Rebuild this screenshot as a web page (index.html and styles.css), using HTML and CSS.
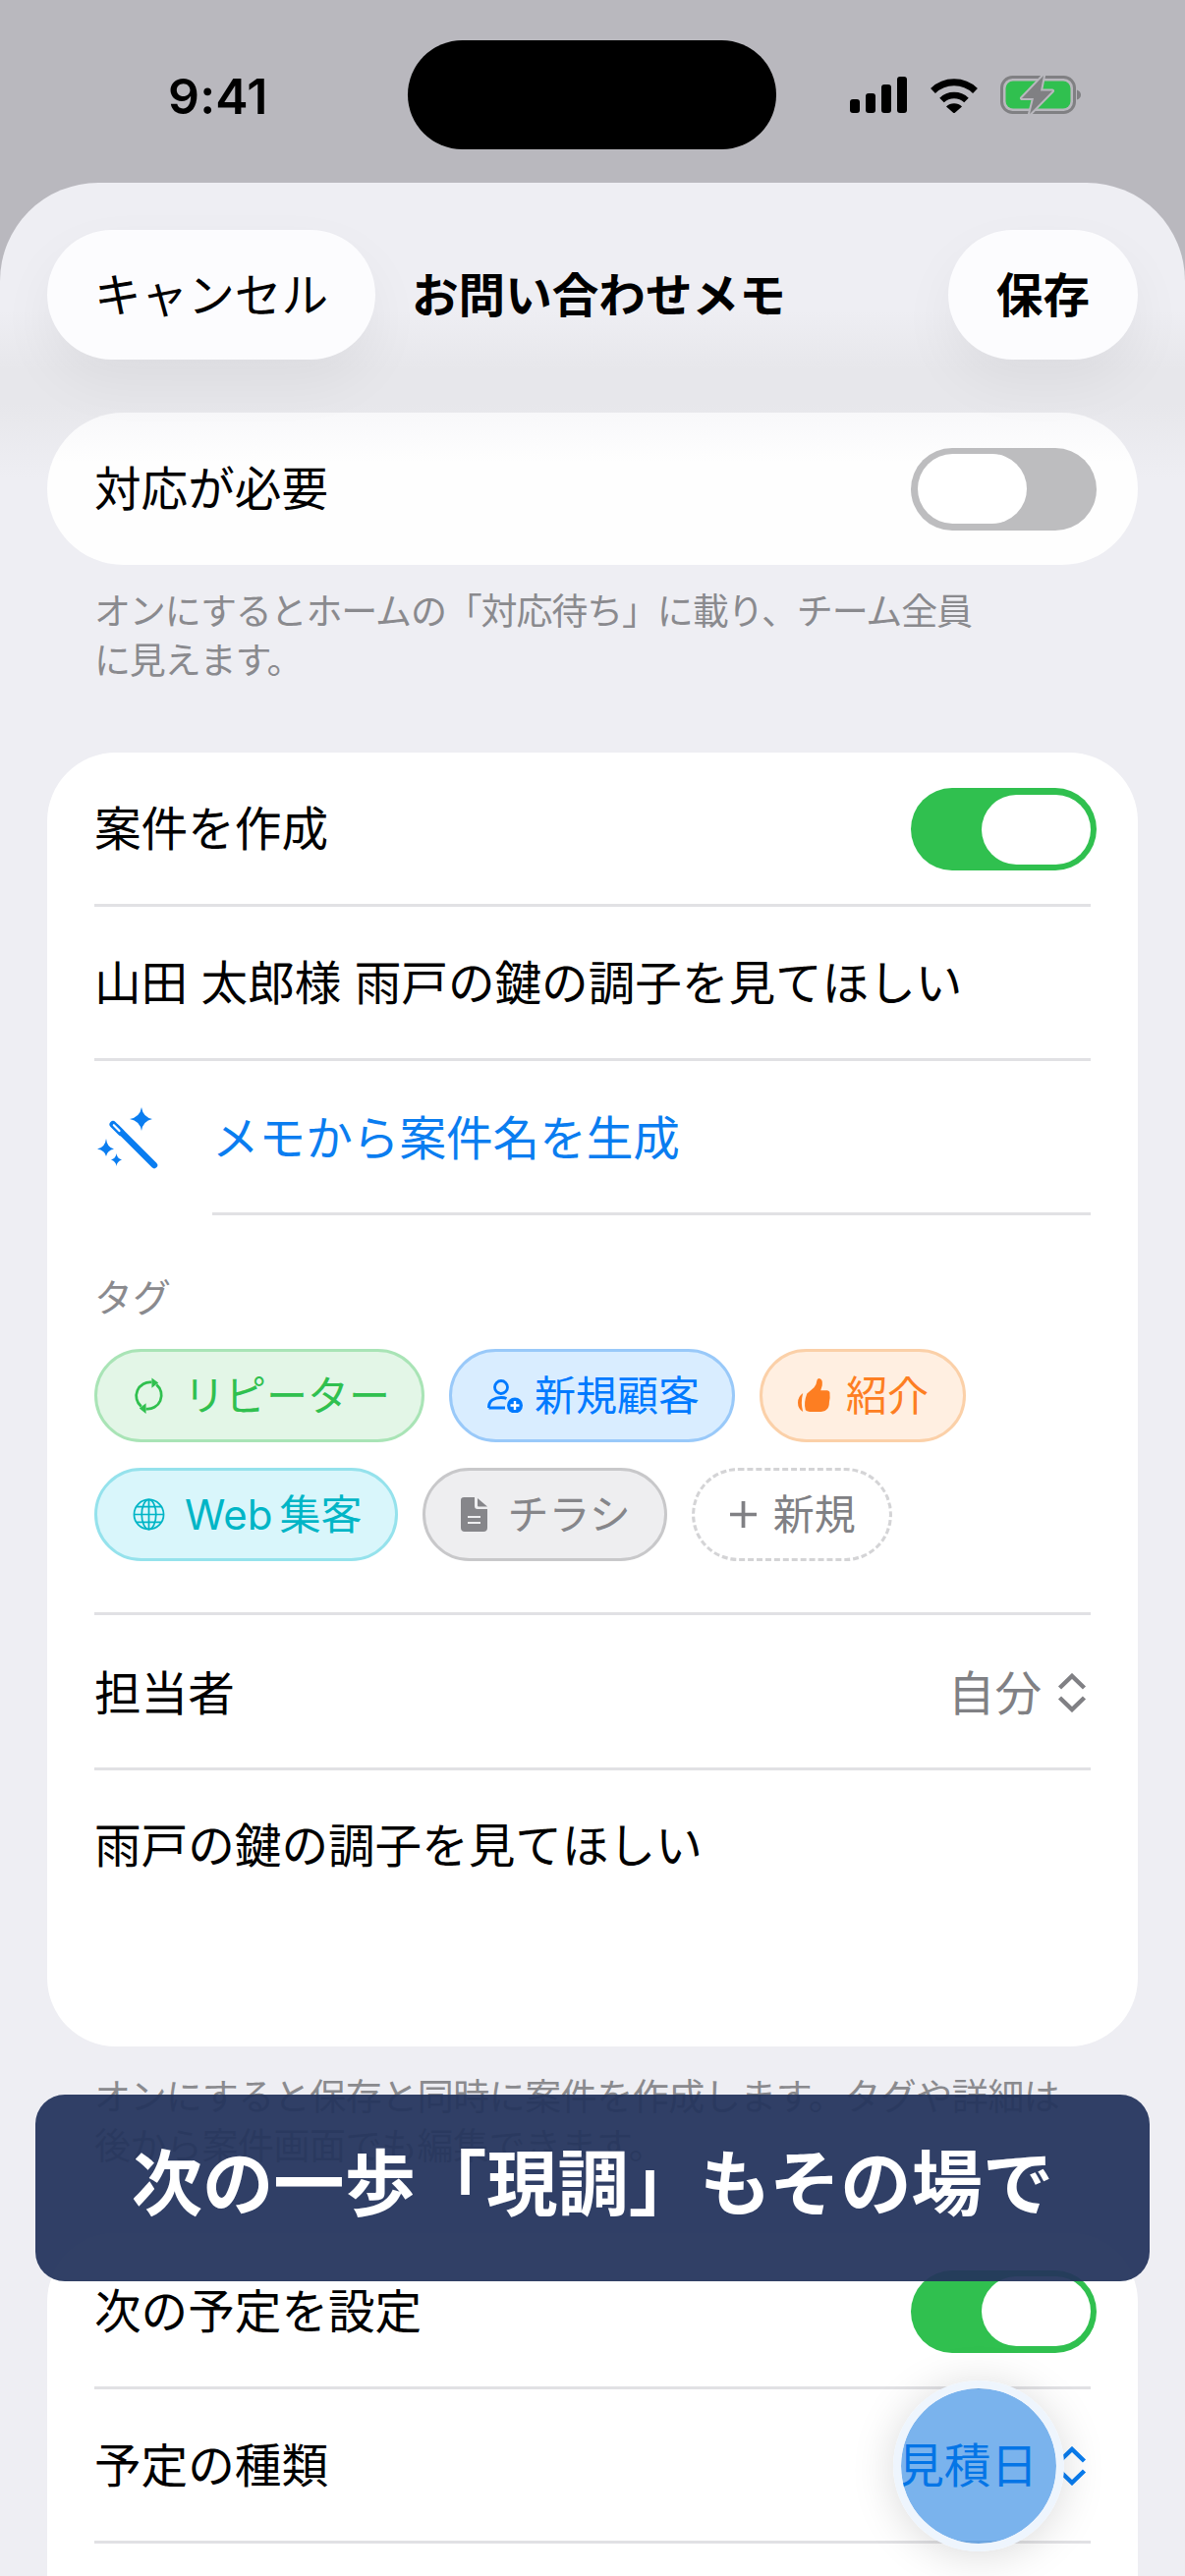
FILE: index.html
```html
<!DOCTYPE html>
<html lang="ja">
<head>
<meta charset="utf-8">
<title>お問い合わせメモ</title>
<link rel="stylesheet" href="styles.css">
</head>
<body>
<div class="phone">
  <header class="status">
    <div class="status-left"><span class="time">9:41</span></div>
    <div class="island"></div>
    <div class="status-right">
      <div class="signal"><i class="b1"></i><i class="b2"></i><i class="b3"></i><i class="b4"></i></div>
      <svg class="wifi" viewBox="0 0 50 37"><path d="M3.500 14.500A31 31 0 0 1 46.500 14.500" fill="none" stroke="#000" stroke-width="7"/><path d="M12.500 24A18 18 0 0 1 37.500 24" fill="none" stroke="#000" stroke-width="6.500"/><path d="M17 30.500A11.500 11.500 0 0 1 33 30.500L25 37.500Z" fill="#000"/></svg>
      <svg class="battery" viewBox="0 0 82 39"><rect x="1.500" y="1.500" width="74" height="36" rx="11" fill="none" stroke="#808083" stroke-width="3"/><rect x="5.500" y="5.500" width="66" height="28" rx="7.500" fill="#30c04f"/><path d="M78 14.500Q82 16 82 19.500T78 24.500Z" fill="#808083"/><path d="M44 0L22 23H34L30 39L53 15.500H41Z" fill="#808083" stroke="#b9b8be" stroke-width="4" stroke-linejoin="round" paint-order="stroke"/></svg>
    </div>
  </header>

  <main class="sheet">
    <nav class="nav">
      <button class="pill">キャンセル</button>
      <h1 class="title">お問い合わせメモ</h1>
      <button class="pill pill-save">保存</button>
    </nav>

    <section class="card card-first">
      <div class="row row-plain">
        <span>対応が必要</span>
        <div class="switch switch-off"><div class="thumb"></div></div>
      </div>
    </section>
    <p class="hint hint-first">オンにするとホームの「対応待ち」に載り、チーム全員<br>に見えます。</p>

    <section class="card card-second">
      <div class="row">
        <span>案件を作成</span>
        <div class="switch switch-on"><div class="thumb"></div></div>
      </div>
      <div class="row"><span>山田 太郎様 雨戸の鍵の調子を見てほしい</span></div>
      <div class="row-gen">
        <svg class="wand" viewBox="0 0 62 63"><path d="M19.500 20.500L58 59" stroke="#0a7df0" stroke-width="6.500" stroke-linecap="round"/><path d="M16 17.500L24 25.500" stroke="#0a7df0" stroke-width="7" stroke-linecap="round"/><path d="M16.800 18.200L22.500 24" stroke="#fff" stroke-width="2.200" stroke-linecap="round"/><path d="M45 0Q46.500 10 56 12Q46.500 14 45 24Q43.500 14 33 12Q43.500 10 45 0Z" fill="#0a7df0"/><path d="M9 32Q10 41 17 42.500Q10 44 9 50Q8 44 0 42.500Q8 41 9 32Z" fill="#0a7df0"/><path d="M19.500 47Q20 52 25 53.500Q20 55 19.500 60Q19 55 14 53.500Q19 52 19.500 47Z" fill="#0a7df0"/></svg>
        <div class="gen-text">メモから案件名を生成</div>
      </div>

      <div class="tags-block">
        <div class="tags-label">タグ</div>
        <div class="tags">
          <div class="chip chip-green">
            <svg class="chip-icon" viewBox="0 0 34 38" fill="none" stroke="#30c04f" stroke-width="2.800"><path d="M9 30.500A14.500 14.500 0 0 1 20 5"/><path d="M25 7.500A14.500 14.500 0 0 1 14 33"/><path d="M20 0.500L27 5.500L20 11Z" fill="#30c04f" stroke="none"/><path d="M14 27L7 32.500L14 38Z" fill="#30c04f" stroke="none"/></svg>
            <span>リピーター</span>
          </div>
          <div class="chip chip-blue">
            <svg class="chip-icon chip-icon-wide" viewBox="0 0 36 34" fill="none" stroke="#007aff" stroke-width="2.800"><circle cx="14" cy="8" r="6.500"/><path d="M1.500 29V27.500C1.500 22 7 18.500 14 18.500C16 18.500 18 18.800 19.500 19.500M1.500 29H18"/><circle cx="28" cy="26.500" r="8" fill="#007aff" stroke="none"/><path d="M28 22V31M23.500 26.500H32.500" stroke="#fff" stroke-width="2.400"/></svg>
            <span>新規顧客</span>
          </div>
          <div class="chip chip-orange">
            <svg class="chip-icon" viewBox="0 0 32 34" fill="#fd7e22"><path d="M5 14.500Q0 18 0 24Q0 30 5 33Q2.500 24 5 14.500Z"/><path d="M9 15L16 9Q18.500 6 19 1.500Q19.500 0 21 0Q25 1 24 7L22.500 12H29Q32 12.500 31.500 16Q32 20 31 23Q31 29 28 31Q26 33 20 33H14Q9 33 7.500 31Q5.500 24 9 15Z"/></svg>
            <span>紹介</span>
          </div>
          <div class="chip chip-cyan">
            <svg class="chip-icon" viewBox="0 0 34 34" fill="none" stroke="#00b5c6" stroke-width="1.800"><circle cx="17" cy="17" r="15.500"/><ellipse cx="17" cy="17" rx="7.500" ry="15.500"/><path d="M17 1.500V32.500M1.500 17H32.500M4 9H30M4 25H30"/></svg>
            <span>Web<span class="latin-gap">集客</span></span>
          </div>
          <div class="chip chip-gray">
            <svg class="chip-icon chip-icon-doc" viewBox="0 0 27 35"><path d="M3 0H14V9Q14 12 17 12H27V31Q27 35 23 35H4Q0 35 0 31V3Q0 0 3 0Z" fill="#86868a"/><path d="M17 1L27 9.500H18Q17 9.500 17 8.500Z" fill="#86868a"/><path d="M7 20H20M7 26H20" stroke="#eeeef0" stroke-width="2"/></svg>
            <span>チラシ</span>
          </div>
          <div class="chip chip-new">
            <svg class="chip-icon chip-icon-plus" viewBox="0 0 26 26"><path d="M13 0V26M0 13H26" stroke="#808084" stroke-width="3.600"/></svg>
            <span>新規</span>
          </div>
        </div>
      </div>

      <div class="row row-top-line">
        <span>担当者</span>
        <div class="value">自分<svg class="updown" viewBox="0 0 30 40" fill="none" stroke="#808084" stroke-width="4.500"><path d="M2.500 15L15 3L27.500 15M2.500 25L15 37L27.500 25"/></svg></div>
      </div>
      <div class="note">雨戸の鍵の調子を見てほしい</div>
    </section>
    <p class="hint hint-second">オンにすると保存と同時に案件を作成します。タグや詳細は<br>後から案件画面でも編集できます。</p>

    <section class="card card-third">
      <div class="row row-tall">
        <span>次の予定を設定</span>
        <div class="switch switch-on"><div class="thumb"></div></div>
      </div>
      <div class="row">
        <span>予定の種類</span>
        <div class="value value-blue">見積日<svg class="updown" viewBox="0 0 30 40" fill="none" stroke="#0a7df0" stroke-width="4.500"><path d="M2.500 15L15 3L27.500 15M2.500 25L15 37L27.500 25"/></svg></div>
      </div>
    </section>
  </main>

  <div class="banner">次の一歩「現調」もその場で</div>
  <div class="touch"></div>
</div>
</body>
</html>
```
FILE: styles.css
```css
* { box-sizing: border-box; }
html, body { margin: 0; padding: 0; }
body {
  width: 1206px;
  height: 2622px;
  overflow: hidden;
  font-family: Inter, "Noto Sans CJK JP", sans-serif;
  color: #000;
}
.phone {
  position: relative;
  width: 1206px;
  height: 2622px;
  overflow: hidden;
  background: #b9b8be;
}

/* status bar */
.status {
  display: flex;
  align-items: center;
  height: 186px;
  padding-top: 41px;
  padding-bottom: 34px;
}
.status-left { width: 415px; padding-left: 171px; }
.time { font-size: 50px; font-weight: 600; letter-spacing: 0.200px; line-height: 1; font-family: Inter, sans-serif; display: block; padding-top: 2px; }
.island { width: 375px; height: 111px; background: #000; border-radius: 56px; }
.status-right { display: flex; align-items: center; padding-left: 75px; }
.signal { display: flex; align-items: flex-end; gap: 6px; height: 37px; }
.signal i { display: block; width: 10px; background: #000; border-radius: 3px; }
.b1 { height: 14px; }
.b2 { height: 20px; }
.b3 { height: 29px; }
.b4 { height: 37px; }
.wifi { width: 50px; height: 37px; margin-left: 23px; display: block; }
.battery { width: 82px; height: 39px; margin-left: 22px; display: block; }

/* sheet */
.sheet {
  height: 2436px;
  background: linear-gradient(#eeeef3 130px, #e7e7eb 190px, #e7e7eb 225px, #eeeef3 300px);
  background-color: #eeeef3;
  border-radius: 100px 100px 0 0;
  padding: 48px 48px 0;
}
.nav { display: flex; align-items: center; gap: 37px; height: 132px; }
.pill {
  height: 132px;
  padding: 0 48px 4px;
  border: 0;
  border-radius: 66px;
  background: #fcfcfe;
  font: 400 47.600px/1 "Noto Sans CJK JP", sans-serif;
  color: #000;
  box-shadow: 0 24px 56px rgba(0, 0, 0, 0.05);
}
.pill-save { margin-left: auto; font-weight: 700; padding: 0 49px 4px; }
.title { margin: 0; padding-bottom: 4px; font-size: 47.600px; font-weight: 700; line-height: 1; font-family: "Noto Sans CJK JP", sans-serif; }

/* cards */
.card { background: #fff; border-radius: 78px; padding: 0 48px; font-size: 47.600px; line-height: 1.2; font-weight: 400; }
.card-first { margin-top: 54px; height: 155px; background: linear-gradient(#f8f8fa, #fefefe 50px); }
.card-second { margin-top: 43px; height: 1317px; border-radius: 70px; }
.card-third { margin-top: 56px; border-radius: 70px; height: 500px; padding-top: 1px; }
.row {
  display: flex;
  align-items: center;
  justify-content: space-between;
  height: 157px;
  padding-top: 2px;
  border-bottom: 3px solid #e1e1e4;
}
.row-plain { height: 155px; border-bottom: 0; padding-top: 0; }
.row-tall { height: 158px; }
.row-top-line { border-top: 3px solid #e1e1e4; height: 161px; padding-top: 4px; }
.row-gen { display: flex; align-items: center; height: 157px; }
.wand { width: 62px; height: 63px; margin-left: 3px; flex: none; }
.gen-text {
  flex: 1;
  height: 157px;
  margin-left: 55px;
  padding-top: 3px;
  display: flex;
  align-items: center;
  color: #0a7df0;
  border-bottom: 3px solid #e1e1e4;
}
.switch { position: relative; display: flex; width: 189px; height: 84px; margin-right: -6px; border-radius: 42px; padding: 6.500px; flex: none; }
.thumb { width: 111px; height: 71px; background: #fff; border-radius: 36px; }
.switch-on { background: #30c04f; justify-content: flex-end; }
.switch-off { background: #bdbdbf; }
.value { display: flex; align-items: center; gap: 16px; margin-right: 4px; color: #808084; }
.value-blue { color: #0a7df0; gap: 20px; }
.updown { width: 30px; height: 40px; display: block; }

/* tags */
.tags-block { height: 404px; padding-top: 60px; }
.tags-label { font-size: 39px; line-height: 48px; color: #8a8a8e; }
.tags { display: flex; flex-wrap: wrap; gap: 26px 25px; margin-top: 28px; width: 940px; }
.chip {
  display: flex;
  align-items: center;
  gap: 20px;
  height: 95px;
  padding: 0 34px 0 36px;
  border: 3px solid;
  border-radius: 48px;
  font-size: 42px;
  line-height: 1;
}
.chip-icon { width: 33px; height: 37px; flex: none; }
.chip-icon-wide { width: 36px; height: 34px; }
.chip-icon-doc { width: 27px; height: 35px; }
.chip-icon-plus { width: 27px; height: 27px; }
.chip-green { color: #30c04f; background: #e3f6e7; border-color: #a9e4b6; gap: 19px; padding-right: 32px; }
.chip-blue { color: #007aff; background: #d9edff; border-color: #99c9f9; gap: 12px; padding-right: 33px; }
.chip-orange { color: #fd7e22; background: #ffefe1; border-color: #fbd0a8; gap: 16px; padding-right: 35px; }
.chip-cyan { color: #00b5c6; background: #d9f6fb; border-color: #95e2ec; }
.chip-gray { color: #86868a; background: #eeeef0; border-color: #c8c8ca; }
.chip-new { color: #808084; background: #fff; border: 3px dashed #d4d4d6; gap: 17px; }
.latin-gap { margin-left: 7px; }

.note { padding-top: 48px; }

/* hints */
.hint { margin: 0; padding: 23px 48px 0; font-size: 37px; line-height: 49.500px; color: #8a8a8e; letter-spacing: -0.500px; }
.hint-first { height: 148px; letter-spacing: -1.150px; }
.hint-second { height: 134px; padding-top: 27px; }

/* overlays */
.banner {
  position: absolute;
  left: 36px;
  top: 2132px;
  width: 1134px;
  height: 190px;
  padding-bottom: 18px;
  border-radius: 30px;
  background: rgba(36, 52, 92, 0.94);
  color: #fff;
  font: 700 72.300px/1 "Noto Sans CJK JP", sans-serif;
  display: flex;
  align-items: center;
  justify-content: center;
}
.touch {
  position: absolute;
  left: 909px;
  top: 2423px;
  width: 174px;
  height: 174px;
  border-radius: 50%;
  background: rgba(0, 110, 220, 0.52);
  background-clip: padding-box;
  border: 8px solid #eef5fd;
  box-shadow: 0 4px 44px rgba(0, 0, 0, 0.15);
}
```
